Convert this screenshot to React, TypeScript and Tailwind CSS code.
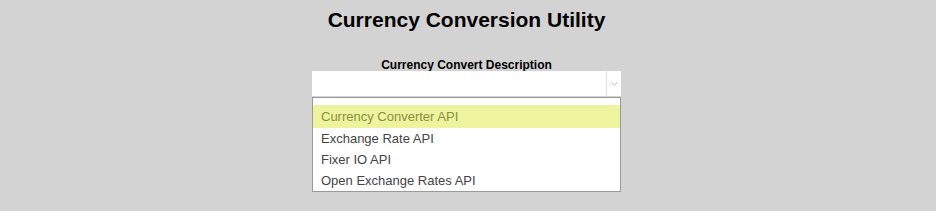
import React from 'react';

const options = ['Currency Converter API', 'Exchange Rate API', 'Fixer IO API', 'Open Exchange Rates API'];

export default function App() {
  return (
    <div
      className="w-[936px] h-[211px] bg-[#d3d3d3] flex flex-col items-center pr-[3px]"
      style={{ fontFamily: '"Liberation Sans", Arial, sans-serif' }}
    >
      <h1 className="mt-[8px] text-[21px] leading-[24px] font-bold text-black">Currency Conversion Utility</h1>

      <div className="mt-[27px] w-[309px] flex flex-col">
        <label className="text-center text-[12px] leading-[12px] font-bold text-black">
          Currency Convert Description
        </label>
        <div className="h-[25px] bg-white flex">
          <div className="flex-1" />
          <div className="w-[15px] border-l border-[#e2e2e2] flex items-center justify-center">
            <svg width="7" height="4" viewBox="0 0 7 4">
              <path d="M0.5 0.5 L3.5 3 L6.5 0.5" fill="none" stroke="#b5b5b5" strokeWidth="1" />
            </svg>
          </div>
        </div>
        <ul className="mt-[1px] bg-white border border-[#9a9a9a] pt-[7px]">
          {options.map((o, i) => (
            <li
              key={o}
              className={
                'pl-[8px] flex items-center text-[13px] ' +
                (i === 0 ? 'bg-[#eef49d] text-[#8b8f42] h-[23px]' : 'text-[#444] h-[21px]')
              }
            >
              {o}
            </li>
          ))}
        </ul>
      </div>
    </div>
  );
}
